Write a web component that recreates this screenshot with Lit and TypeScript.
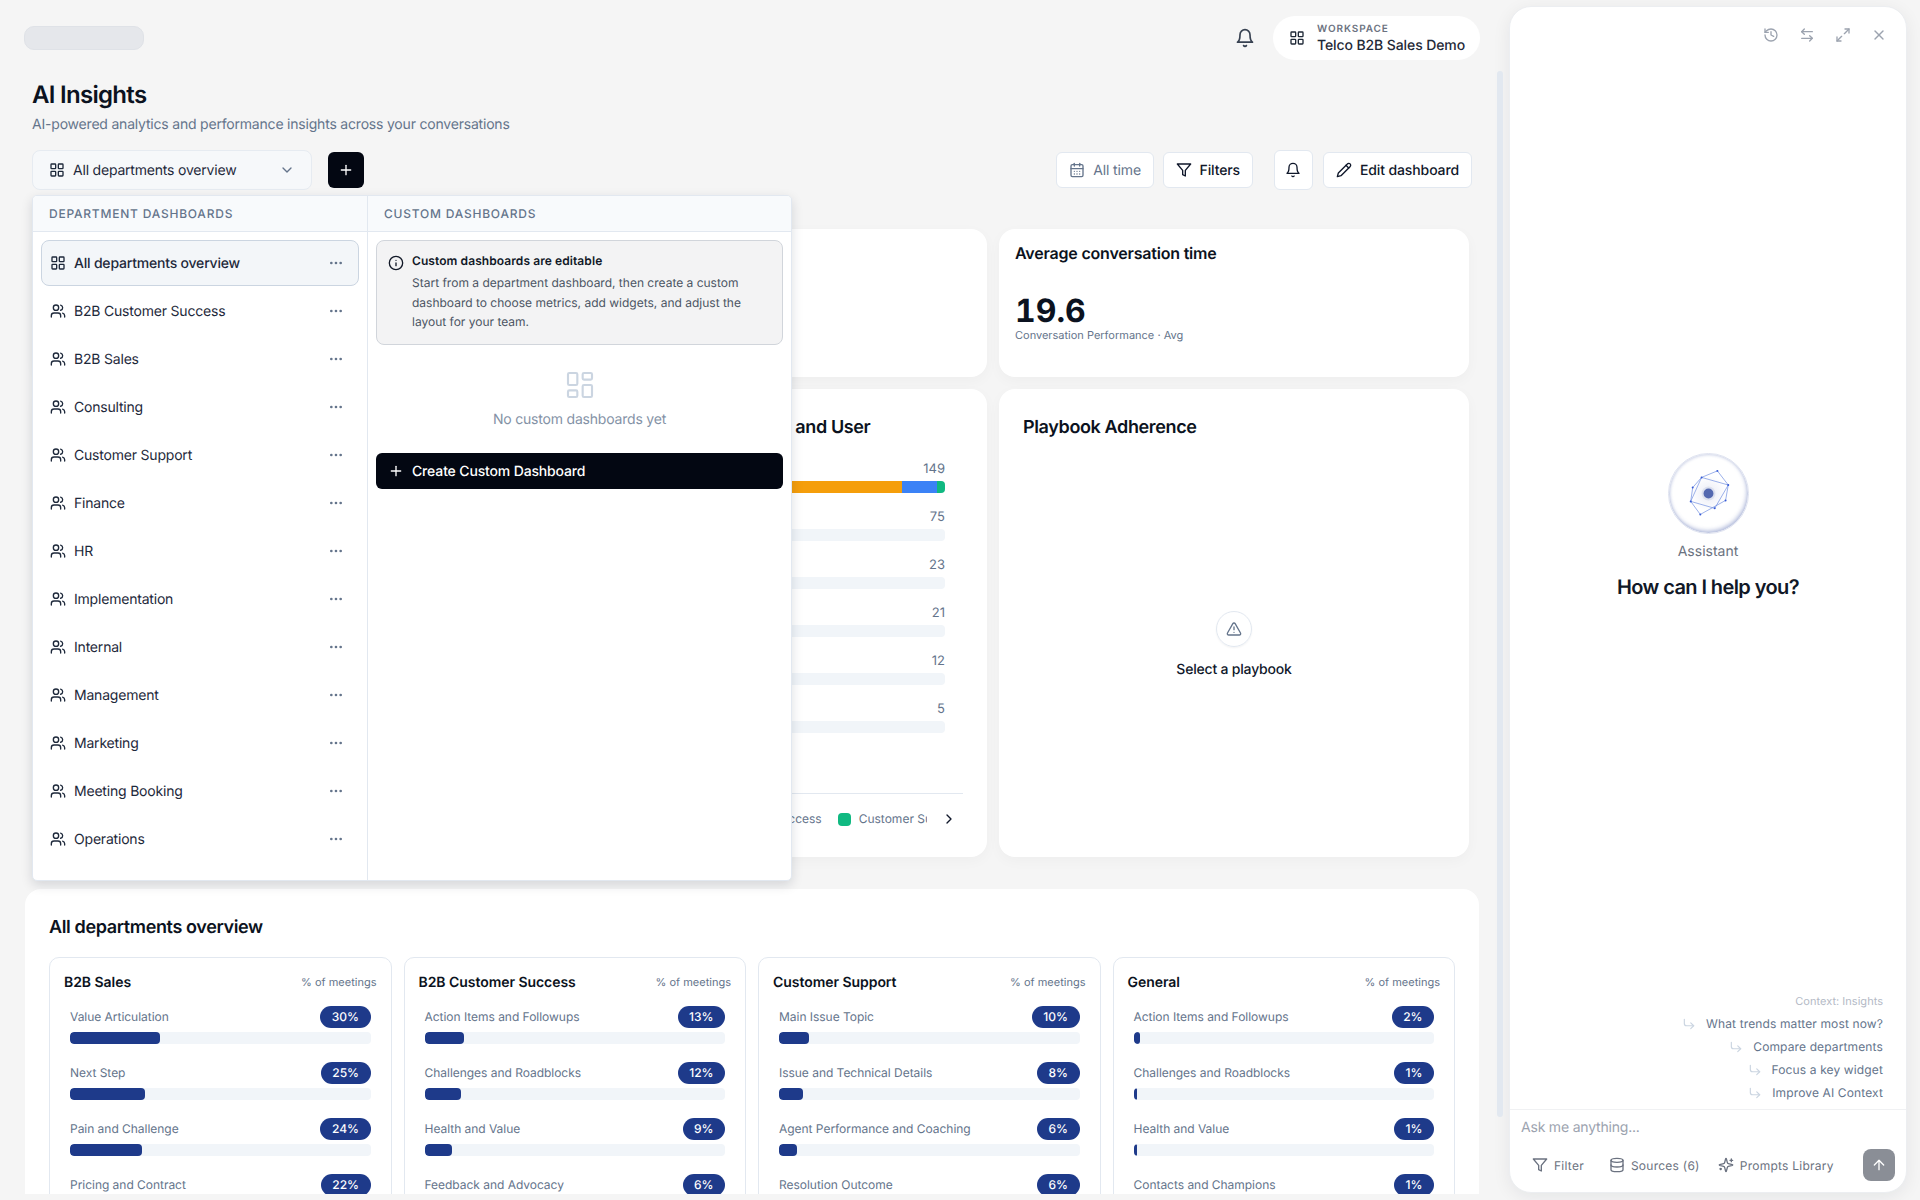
import { LitElement, html, css, svg } from "lit";
import { customElement } from "lit/decorators.js";

const paths: Record<string, any> = {
  grid: svg`<rect x="3" y="3" width="7" height="7" rx="1"/><rect x="14" y="3" width="7" height="7" rx="1"/><rect x="14" y="14" width="7" height="7" rx="1"/><rect x="3" y="14" width="7" height="7" rx="1"/>`,
  dash: svg`<rect x="3" y="3" width="7" height="9" rx="1"/><rect x="14" y="3" width="7" height="5" rx="1"/><rect x="14" y="12" width="7" height="9" rx="1"/><rect x="3" y="16" width="7" height="5" rx="1"/>`,
  users: svg`<path d="M16 21v-2a4 4 0 0 0-4-4H6a4 4 0 0 0-4 4v2"/><circle cx="9" cy="7" r="4"/><path d="M22 21v-2a4 4 0 0 0-3-3.87"/><path d="M16 3.13a4 4 0 0 1 0 7.75"/>`,
  dots: svg`<circle cx="12" cy="12" r="1"/><circle cx="19" cy="12" r="1"/><circle cx="5" cy="12" r="1"/>`,
  bell: svg`<path d="M6 8a6 6 0 0 1 12 0c0 7 3 9 3 9H3s3-2 3-9"/><path d="M10.3 21a1.94 1.94 0 0 0 3.4 0"/>`,
  chevDown: svg`<path d="m6 9 6 6 6-6"/>`,
  chevRight: svg`<path d="m9 18 6-6-6-6"/>`,
  plus: svg`<path d="M5 12h14"/><path d="M12 5v14"/>`,
  cal: svg`<path d="M8 2v4"/><path d="M16 2v4"/><rect x="3" y="4" width="18" height="18" rx="2"/><path d="M3 10h18"/><path d="M8 14h.01"/><path d="M12 14h.01"/><path d="M16 14h.01"/><path d="M8 18h.01"/><path d="M12 18h.01"/><path d="M16 18h.01"/>`,
  funnel: svg`<path d="M22 3H2l8 9.46V19l4 2v-8.54L22 3z"/>`,
  pencil: svg`<path d="M17 3a2.85 2.83 0 1 1 4 4L7.5 20.5 2 22l1.5-5.5Z"/><path d="m15 5 4 4"/>`,
  info: svg`<circle cx="12" cy="12" r="10"/><path d="M12 16v-4"/><path d="M12 8h.01"/>`,
  warn: svg`<path d="m21.73 18-8-14a2 2 0 0 0-3.48 0l-8 14A2 2 0 0 0 4 21h16a2 2 0 0 0 1.73-3"/><path d="M12 9v4"/><path d="M12 17h.01"/>`,
  history: svg`<path d="M3 12a9 9 0 1 0 9-9 9.75 9.75 0 0 0-6.74 2.74L3 8"/><path d="M3 3v5h5"/><path d="M12 7v5l4 2"/>`,
  swap: svg`<path d="M8 3 4 7l4 4"/><path d="M4 7h16"/><path d="m16 21 4-4-4-4"/><path d="M20 17H4"/>`,
  expand: svg`<path d="M15 3h6v6"/><path d="M9 21H3v-6"/><path d="M21 3l-7 7"/><path d="M3 21l7-7"/>`,
  close: svg`<path d="M18 6 6 18"/><path d="m6 6 12 12"/>`,
  corner: svg`<path d="m15 10 5 5-5 5"/><path d="M4 4v7a4 4 0 0 0 4 4h12"/>`,
  db: svg`<ellipse cx="12" cy="5" rx="9" ry="3"/><path d="M3 5v14a9 3 0 0 0 18 0V5"/><path d="M3 12a9 3 0 0 0 18 0"/>`,
  spark: svg`<path d="M9.94 15.5A2 2 0 0 0 8.5 14.06l-6.14-1.58a.5.5 0 0 1 0-.96L8.5 9.94A2 2 0 0 0 9.94 8.5l1.58-6.14a.5.5 0 0 1 .96 0L14.06 8.5A2 2 0 0 0 15.5 9.94l6.14 1.58a.5.5 0 0 1 0 .96L15.5 14.06a2 2 0 0 0-1.44 1.44l-1.58 6.14a.5.5 0 0 1-.96 0z"/><path d="M20 3v4"/><path d="M22 5h-4"/><path d="M4 17v2"/><path d="M5 18H3"/>`,
  up: svg`<path d="m5 12 7-7 7 7"/><path d="M12 19V5"/>`,
};

const icon = (name: string, cls = "i16") =>
  html`<svg class="ic ${cls}" viewBox="0 0 24 24" fill="none" stroke="currentColor" stroke-width="2" stroke-linecap="round" stroke-linejoin="round">${paths[name]}</svg>`;

const departments = [
  "B2B Customer Success", "B2B Sales", "Consulting", "Customer Support", "Finance", "HR",
  "Implementation", "Internal", "Management", "Marketing", "Meeting Booking", "Operations",
];

const overview = [
  { name: "B2B Sales", rows: [["Value Articulation", 30], ["Next Step", 25], ["Pain and Challenge", 24], ["Pricing and Contract", 22]] },
  { name: "B2B Customer Success", rows: [["Action Items and Followups", 13], ["Challenges and Roadblocks", 12], ["Health and Value", 9], ["Feedback and Advocacy", 6]] },
  { name: "Customer Support", rows: [["Main Issue Topic", 10], ["Issue and Technical Details", 8], ["Agent Performance and Coaching", 6], ["Resolution Outcome", 6]] },
  { name: "General", rows: [["Action Items and Followups", 2], ["Challenges and Roadblocks", 1], ["Health and Value", 1], ["Contacts and Champions", 1]] },
];

const counts = [149, 75, 23, 21, 12, 5];
const suggestions = ["What trends matter most now?", "Compare departments", "Focus a key widget", "Improve AI Context"];

@customElement("app-root")
export class AppRoot extends LitElement {
  static styles = css`
    :host { display: block; width: 1920px; height: 1200px; overflow: hidden; background: #f5f5f5; color: #0f172a;
      font-family: Inter, "Liberation Sans", sans-serif; font-size: 14px; letter-spacing: -0.2px; text-rendering: geometricPrecision; }
    * { box-sizing: border-box; }
    .ic { flex: none; display: block; }
    .i14 { width: 14px; height: 14px; } .i16 { width: 16px; height: 16px; }
    .i20 { width: 20px; height: 20px; } .i32 { width: 32px; height: 32px; }
    .root { display: flex; height: 1200px; }
    .main { position: relative; width: 1503px; height: 1194px; overflow: hidden; flex: none; }
    .thumb { position: absolute; left: 1497px; top: 71px; width: 6px; height: 1046px; border-radius: 3px; background: #e2e8f0; }

    .topbar { display: flex; justify-content: space-between; align-items: center; padding: 16px 23px 0 24px; }
    .skeleton { width: 120px; height: 24px; background: #e5e7eb; border: 1px solid #dfe2e7; border-radius: 10px; }
    .top-right { display: flex; align-items: center; gap: 18px; color: #374151; }
    .ws { display: flex; align-items: center; gap: 12px; height: 44px; width: 207px; padding: 0 16px; background: #fff; border-radius: 22px; color: #1f2937; }
    .ws-text { display: flex; flex-direction: column; padding-top: 1px; }
    .ws-label { font-size: 10px; line-height: 13px; letter-spacing: .9px; font-weight: 600; color: #6b7280; }
    .ws-name { font-size: 14px; line-height: 19px; font-weight: 500; white-space: nowrap; letter-spacing: -0.1px; }

    .head { padding: 19px 0 0 32px; }
    .head h1 { margin: 0; font-size: 24px; line-height: 32px; font-weight: 600; color: #0b1220; letter-spacing: -0.7px; }
    .head p { margin: 4px 0 0; font-size: 14px; line-height: 20px; color: #64748b; }

    .toolbar { display: flex; align-items: center; margin: 15px 31px 0 32px; height: 40px; }
    .select { display: flex; align-items: center; gap: 8px; width: 280px; height: 40px; padding: 0 16px; background: #f6f8fa; border: 1px solid #e6ebf1; border-radius: 8px; color: #1e293b; }
    .select span { flex: 1; }
    .select .chev { color: #64748b; }
    .add { display: flex; align-items: center; justify-content: center; width: 36px; height: 36px; margin-left: 16px; background: #030712; color: #fff; border-radius: 6px; }
    .tb-right { margin-left: auto; display: flex; align-items: center; gap: 10px; }
    .btn { display: flex; align-items: center; gap: 8px; height: 36px; padding: 0 12px; background: #fff; border: 1px solid #e2e8f0; border-radius: 6px; font-weight: 500; color: #0f172a; white-space: nowrap; letter-spacing: -0.12px; }
    .btn.muted { font-weight: 400; color: #64748b; margin-right: -1.5px; }
    .btn.icon { width: 39px; height: 40px; padding: 0; justify-content: center; margin-left: 11px; }

    .cards { display: grid; grid-template-columns: repeat(3, 470px); grid-template-rows: 148px 468px; gap: 12px; width: 1434px; margin: 39px 0 0 35px; }
    .card { background: #fff; border-radius: 16px; box-shadow: 0 4px 14px rgba(15, 23, 42, .03); min-width: 0; }
    .metric { padding: 12px 16px; }
    .metric h3 { margin: 0; font-size: 16px; line-height: 24px; font-weight: 600; color: #0b1220; }
    .metric .val { margin-top: 28px; font-size: 32px; line-height: 36px; font-weight: 700; color: #0b1220; font-variant-numeric: tabular-nums; letter-spacing: 0; }
    .metric .sub { margin-top: -2px; font-size: 11px; line-height: 16px; color: #64748b; letter-spacing: 0; }
    .chart { display: flex; flex-direction: column; padding: 24px 24px 28px; }
    .chart h3, .play h3 { margin: 0; padding-top: 1px; font-size: 18px; line-height: 28px; font-weight: 600; color: #0b1220; white-space: nowrap; letter-spacing: -0.37px; }
    .bars { margin: 16px 18px 0 0; display: flex; flex-direction: column; gap: 13px; }
    .bar-n { text-align: right; font-size: 13px; line-height: 20px; color: #64748b; padding-top: 1px; margin-bottom: 2px; letter-spacing: 0; height: 21px; }
    .track { display: flex; height: 12px; background: #f1f5f9; border-radius: 4px; overflow: hidden; }
    .seg-a { background: #f59e0b; flex: 1; } .seg-b { background: #3b82f6; width: 35px; } .seg-c { background: #10b981; width: 8px; }
    .seg-n { background: #f1f5f9; }
    .legend { margin-top: auto; display: flex; align-items: center; gap: 14px; padding: 15px 6px 0 0; border-top: 1px solid #e2e8f0; color: #64748b; font-size: 12px; line-height: 20px; letter-spacing: 0; }
    .leg-clip { flex: 1; min-width: 0; display: flex; gap: 16px; justify-content: flex-start; overflow: hidden; white-space: nowrap; padding-left: 126.5px; }
    .leg-item { display: flex; align-items: center; gap: 8px; flex: none; }
    .swatch { width: 13px; height: 13px; border-radius: 4px; background: #10b981; }
    .swatch.blue { background: #3b82f6; }
    .legend .more { color: #0f172a; }
    .play { display: flex; flex-direction: column; padding: 24px; }
    .play-empty { flex: 1; display: flex; flex-direction: column; align-items: center; justify-content: center; padding-top: 15px; gap: 12px; }
    .warn { display: flex; align-items: center; justify-content: center; width: 36px; height: 36px; border-radius: 50%; border: 1px solid #e2e8f0; color: #64748b; box-shadow: 0 1px 2px rgba(15,23,42,.05); }
    .play-empty span { font-weight: 500; line-height: 20px; color: #0f172a; padding-top: 1px; }

    .panel { margin: 32px 0 0 25px; width: 1454px; height: 400px; background: #fff; border-radius: 16px; padding: 24px; }
    .panel h2 { margin: 0 0 15px; padding-top: 1px; font-size: 18px; line-height: 28px; font-weight: 600; color: #0b1220; letter-spacing: -0.37px; }
    .ov-grid { display: grid; grid-template-columns: repeat(4, 1fr); gap: 12px; }
    .ov { border: 1px solid #e2e8f0; border-radius: 10px; padding: 14px; }
    .ov-head { display: flex; justify-content: space-between; align-items: center; height: 20px; }
    .ov-head b { font-weight: 600; font-size: 14px; color: #0b1220; letter-spacing: -0.05px; }
    .ov-head span { font-size: 11px; color: #64748b; letter-spacing: 0; }
    .ov-rows { margin-top: 14px; padding: 0 6px; display: flex; flex-direction: column; gap: 18px; }
    .ov-top { display: flex; justify-content: space-between; align-items: center; height: 22px; font-size: 12px; color: #64748b; letter-spacing: -0.03px; }
    .ov-label { padding-bottom: 2px; }
    .badge { height: 22px; line-height: 22px; padding: 0 11.5px; border-radius: 11px; background: #1e3a8a; color: #fff; font-weight: 500; font-size: 12px; letter-spacing: 0; }
    .ov-track { margin-top: 4px; height: 12px; background: #f1f5f9; border-radius: 4px; overflow: hidden; }
    .ov-fill { height: 100%; background: #1e3a8a; border-radius: 4px; }

    .pop { position: absolute; left: 32px; top: 195px; width: 760px; height: 686px; background: #fff; border: 1px solid #e2e8f0; border-radius: 5px; box-shadow: 0 4px 12px rgba(15,23,42,.14); display: grid; grid-template-columns: 334px 1fr; overflow: hidden; z-index: 2; }
    .col { display: flex; flex-direction: column; min-height: 0; }
    .col + .col { border-left: 1px solid #e2e8f0; }
    .col-head { height: 36px; flex: none; background: #f8fafc; border-bottom: 1px solid #e2e8f0; padding: 0 16px; display: flex; align-items: center; font-size: 12px; font-weight: 500; letter-spacing: .78px; color: #64748b; text-transform: uppercase; }
    .list { padding: 8px 8px 0 8px; display: flex; flex-direction: column; gap: 2px; }
    .row { display: flex; align-items: center; gap: 8px; height: 46px; flex: none; padding: 0 14px 0 8px; border: 1px solid transparent; border-radius: 8px; color: #1e293b; }
    .row.on { background: #f3f6f9; border-color: #cbd5e1; font-weight: 500; }
    .row span { flex: 1; }
    .row .dots { color: #64748b; }
    .custom { padding: 8px 8px 0; display: flex; flex-direction: column; }
    .note { display: flex; gap: 8px; padding: 12px 11px; background: #f3f3f4; border: 1px solid #d1d5db; border-radius: 8px; font-size: 12px; letter-spacing: 0; }
    .note .ic { margin-top: 2px; color: #111827; }
    .note b { display: block; font-weight: 600; line-height: 16px; color: #111827; letter-spacing: .08px; }
    .note p { margin: 4px 0 0; line-height: 19.5px; color: #4b5563; padding-right: 16px; }
    .no-custom { display: flex; flex-direction: column; align-items: center; gap: 8px; padding: 24px 0 23px; color: #94a3b8; }
    .no-custom .ic { color: #cbd5e1; stroke-width: 1.6; }
    .no-custom span { line-height: 20px; color: #8492a6; padding-top: 1px; }
    .create { display: flex; align-items: center; gap: 8px; height: 36px; padding: 1px 12px 0; background: #030712; color: #fff; border-radius: 6px; font-weight: 500; letter-spacing: -0.15px; }

    .asst { margin: 6px 13px 0 6px; width: 398px; height: 1187px; flex: none; background: #fff; border: 1px solid #eceef1; border-radius: 22px; box-shadow: 0 4px 18px rgba(15,23,42,.07); display: flex; flex-direction: column; overflow: hidden; }
    .asst-top { display: flex; justify-content: flex-end; gap: 20px; padding: 20px 19px 0; color: #9ca3af; }
    .asst-body { flex: 1; display: flex; flex-direction: column; align-items: center; padding-top: 410px; }
    .avatar { width: 81px; height: 81px; border-radius: 50%; background: radial-gradient(circle, #e9ebf5 0%, #fff 32%); border: 1px solid #dfe3f0; box-shadow: inset -1px -2px 4px rgba(84,105,176,.45), inset 1px 1px 3px rgba(84,105,176,.2); }
    .avatar svg { display: block; width: 100%; height: 100%; }
    .asst-name { margin-top: 8px; font-size: 14px; line-height: 20px; color: #6b7280; letter-spacing: 0; }
    .asst-title { margin: 11px 0 0; font-size: 20px; line-height: 28px; font-weight: 600; color: #111827; letter-spacing: -0.6px; }
    .sugg { display: flex; flex-direction: column; align-items: flex-end; gap: 7px; padding: 0 23px 8px 0; font-size: 12px; line-height: 16px; color: #64748b; letter-spacing: .13px; }
    .ctx { font-size: 11px; color: #b4bac6; letter-spacing: .02px; }
    .sugg-item { display: flex; align-items: center; gap: 10px; }
    .sugg-item .ic { color: #cbd5e1; }
    .input { border-top: 1px solid #f0f1f3; padding: 8px 11px 0; line-height: 20px; color: #9ca3af; height: 40px; }
    .tools { display: flex; align-items: center; height: 32px; margin: 0 11px 11px 0; font-size: 12px; color: #6b7280; padding-left: 22px; letter-spacing: .25px; }
    .tool { display: flex; align-items: center; gap: 6px; margin-right: 25px; }
    .tool + .tool { margin-right: 18px; }
    .send { margin-left: auto; width: 32px; height: 32px; border-radius: 8px; background: #8a8e96; color: #fff; display: flex; align-items: center; justify-content: center; }
  `;

  render() {
    return html`<div class="root">
      <div class="main">
        <div class="topbar">
          <div class="skeleton"></div>
          <div class="top-right">
            ${icon("bell", "i20")}
            <div class="ws">
              ${icon("grid")}
              <div class="ws-text"><span class="ws-label">WORKSPACE</span><span class="ws-name">Telco B2B Sales Demo</span></div>
            </div>
          </div>
        </div>
        <div class="head">
          <h1>AI Insights</h1>
          <p>AI-powered analytics and performance insights across your conversations</p>
        </div>
        <div class="toolbar">
          <div class="select">${icon("grid")}<span>All departments overview</span><div class="chev">${icon("chevDown")}</div></div>
          <div class="add">${icon("plus")}</div>
          <div class="tb-right">
            <div class="btn muted">${icon("cal")}All time</div>
            <div class="btn">${icon("funnel")}Filters</div>
            <div class="btn icon">${icon("bell")}</div>
            <div class="btn">${icon("pencil")}Edit dashboard</div>
          </div>
        </div>
        <div class="cards">
          <div class="card"></div>
          <div class="card"></div>
          <div class="card metric">
            <h3>Average conversation time</h3>
            <div class="val">19.6</div>
            <div class="sub">Conversation Performance · Avg</div>
          </div>
          <div class="card"></div>
          <div class="card chart">
            <h3>Conversations by Department and User</h3>
            <div class="bars">
              ${counts.map((n, i) => html`<div>
                <div class="bar-n">${n}</div>
                <div class="track">${i === 0
                  ? html`<div class="seg-a"></div><div class="seg-b"></div><div class="seg-c"></div>`
                  : html`<div class="seg-n"></div>`}</div>
              </div>`)}
            </div>
            <div class="legend">
              <div class="leg-clip">
                <div class="leg-item"><i class="swatch blue"></i>B2B Customer Success</div>
                <div class="leg-item"><i class="swatch"></i>Customer Support</div>
              </div>
              <div class="more">${icon("chevRight")}</div>
            </div>
          </div>
          <div class="card play">
            <h3>Playbook Adherence</h3>
            <div class="play-empty"><div class="warn">${icon("warn")}</div><span>Select a playbook</span></div>
          </div>
        </div>
        <div class="panel">
          <h2>All departments overview</h2>
          <div class="ov-grid">
            ${overview.map((c) => html`<div class="ov">
              <div class="ov-head"><b>${c.name}</b><span>% of meetings</span></div>
              <div class="ov-rows">
                ${c.rows.map((r) => html`<div>
                  <div class="ov-top"><span class="ov-label">${r[0]}</span><span class="badge">${r[1]}%</span></div>
                  <div class="ov-track"><div class="ov-fill" style="width:${r[1]}%"></div></div>
                </div>`)}
              </div>
            </div>`)}
          </div>
        </div>
        <div class="pop">
          <div class="col">
            <div class="col-head">Department dashboards</div>
            <div class="list">
              <div class="row on">${icon("grid")}<span>All departments overview</span><div class="dots">${icon("dots")}</div></div>
              ${departments.map((d) => html`<div class="row">${icon("users")}<span>${d}</span><div class="dots">${icon("dots")}</div></div>`)}
            </div>
          </div>
          <div class="col">
            <div class="col-head">Custom dashboards</div>
            <div class="custom">
              <div class="note">${icon("info")}
                <div><b>Custom dashboards are editable</b>
                <p>Start from a department dashboard, then create a custom dashboard to choose metrics, add widgets, and adjust the layout for your team.</p></div>
              </div>
              <div class="no-custom">${icon("dash", "i32")}<span>No custom dashboards yet</span></div>
              <div class="create">${icon("plus")}Create Custom Dashboard</div>
            </div>
          </div>
        </div>
        <div class="thumb"></div>
      </div>
      <div class="asst">
        <div class="asst-top">${icon("history")}${icon("swap")}${icon("expand")}${icon("close")}</div>
        <div class="asst-body">
          <div class="avatar">
            <svg viewBox="-40 -40 80 80" fill="none">
              <circle r="7" fill="#5469b0" opacity=".12"></circle>
              <circle r="5" fill="#5469b0"></circle>
              <g stroke="#6f8ee0" stroke-width=".7">
                <polygon points="-7,-16.3 20,-8.6 6.3,15 -18,8"></polygon>
                <polygon points="-7,-16.3 9,-22.9 20,-8.6 17.3,7 -8.3,21.2 -18,8 -16,-6"></polygon>
              </g>
              <g fill="#3559d6">
                <circle cx="-7" cy="-16.3" r="1"></circle><circle cx="9" cy="-22.9" r="1"></circle>
                <circle cx="20" cy="-8.6" r="1"></circle><circle cx="17.3" cy="7" r="1"></circle>
                <circle cx="6.3" cy="15" r="1"></circle><circle cx="-8.3" cy="21.2" r="1"></circle>
                <circle cx="-18" cy="8" r="1"></circle><circle cx="-16" cy="-6" r="1"></circle>
              </g>
            </svg>
          </div>
          <div class="asst-name">Assistant</div>
          <h2 class="asst-title">How can I help you?</h2>
        </div>
        <div class="sugg">
          <div class="ctx">Context: Insights</div>
          ${suggestions.map((s) => html`<div class="sugg-item">${icon("corner", "i14")}${s}</div>`)}
        </div>
        <div class="input">Ask me anything...</div>
        <div class="tools">
          <div class="tool">${icon("funnel")}Filter</div>
          <div class="tool">${icon("db")}Sources (6)</div>
          <div class="tool">${icon("spark")}Prompts Library</div>
          <div class="send">${icon("up")}</div>
        </div>
      </div>
    </div>`;
  }
}
